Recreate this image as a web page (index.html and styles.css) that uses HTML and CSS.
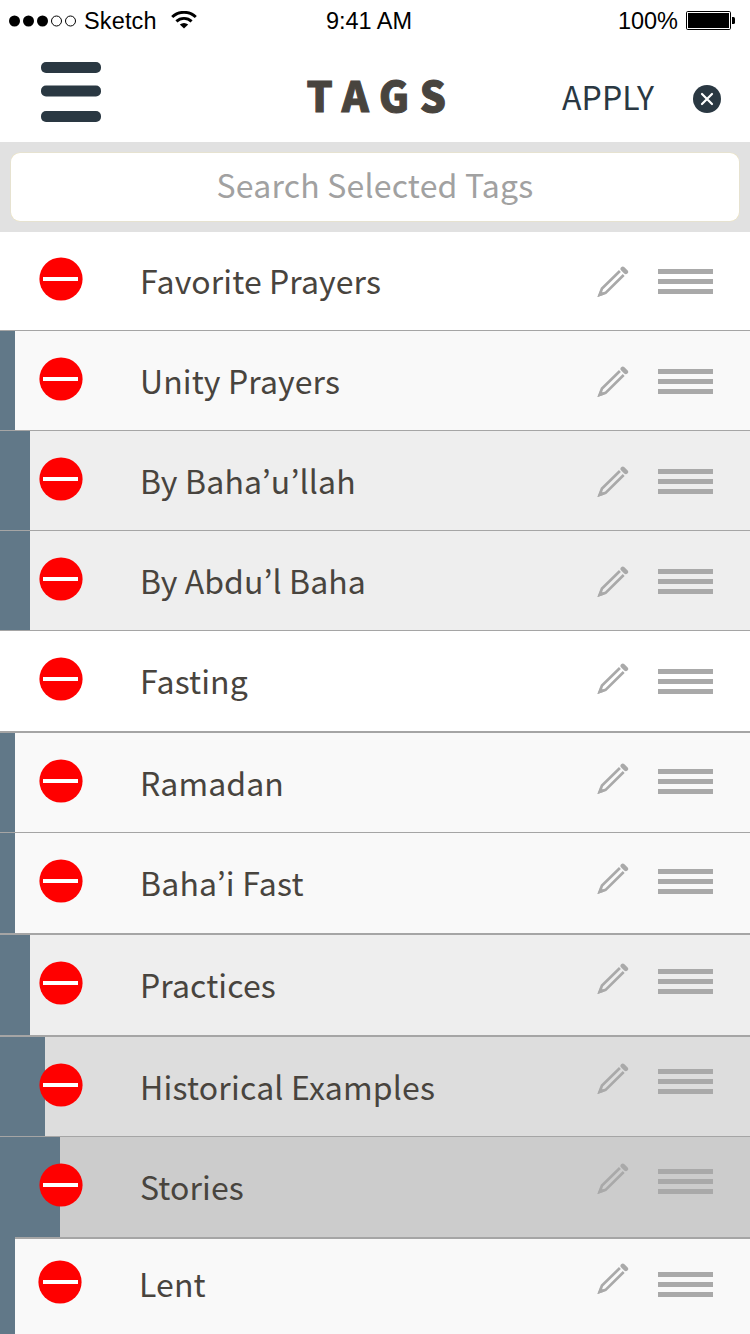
FILE: index.html
```html
<!DOCTYPE html>
<html lang="en">
<head>
<meta charset="utf-8">
<title>Tags</title>
<link rel="stylesheet" href="styles.css">
</head>
<body>
<svg class="defs" aria-hidden="true">
  <symbol id="remove" viewBox="0 0 44 44">
    <circle cx="22" cy="22" r="21.6" fill="#ff0000"/>
    <path d="M4 22H39" stroke="#fff" stroke-width="4"/>
  </symbol>
  <symbol id="remove-last" viewBox="0 0 44 44">
    <circle cx="22" cy="22" r="21.6" fill="#ff0000"/>
    <path d="M5 22H40" stroke="#fff" stroke-width="4"/>
  </symbol>
  <symbol id="pencil" viewBox="0 0 32 32">
    <path d="M22.9 5L5 22.5L2.600 28.800L8.600 26.900L26.700 9" fill="none" stroke="#a9a9a9" stroke-width="2.700"/>
    <path d="M.6 31L3.400 24L7.500 28.600Z" fill="#a9a9a9"/>
    <path d="M25.800 2.900L28.800 5.900" stroke="#a9a9a9" stroke-width="4.600" stroke-linecap="round"/>
  </symbol>
  <symbol id="grip" viewBox="0 0 55 25">
    <path d="M0 2.5H55M0 12.5H55M0 22.5H55" stroke="#a9a9a9" stroke-width="5"/>
  </symbol>
</svg>
<div class="screen">
  <div class="status">
    <div class="carrier">
      <svg class="signal" width="68" height="12" viewBox="0 0 68 12">
        <circle cx="5.5" cy="6" r="5.5"/><circle cx="19.5" cy="6" r="5.5"/><circle cx="33.5" cy="6" r="5.5"/>
        <g fill="none" stroke="#000"><circle cx="47.5" cy="6" r="5"/><circle cx="61.5" cy="6" r="5"/></g>
      </svg>
      <span class="carrier-name">Sketch</span>
      <svg class="wifi" width="26" height="18" viewBox="0 0 26 18">
        <g fill="none" stroke="#000"><path d="M1.200 6A17.300 17.300 0 0 1 24.800 6" stroke-width="3"/><path d="M5.400 10.400A11 11 0 0 1 20.600 10.400" stroke-width="2.900"/></g>
        <path d="M13 17.600L8.800 13.600Q13 10.200 17.200 13.600Z"/>
      </svg>
    </div>
    <span class="time">9:41 AM</span>
    <div class="power">
      <span class="percent">100%</span>
      <svg width="49" height="19" viewBox="0 0 49 19">
        <rect x=".5" y=".5" width="44" height="18" rx="1.2" fill="none" stroke="#000"/>
        <rect x="2" y="2" width="41" height="15"/>
        <path d="M46 6h1.500q1.500 0 1.500 1.500v4q0 1.500-1.500 1.500H46z"/>
      </svg>
    </div>
  </div>
  <header class="header">
    <svg class="menu" width="60" height="60" viewBox="0 0 60 60" fill="#2a3842">
      <rect width="60" height="11" rx="5"/><rect y="23.500" width="60" height="11" rx="5"/><rect y="49" width="60" height="11" rx="5"/>
    </svg>
    <h1 class="title">TAGS</h1>
    <span class="apply">APPLY</span>
    <svg class="close" width="28" height="28" viewBox="0 0 28 28">
      <circle cx="14" cy="14" r="14" fill="#2a3842"/>
      <path d="M9 9L19 19M19 9L9 19" stroke="#fff" stroke-width="2.200" stroke-linecap="round"/>
    </svg>
  </header>
  <div class="search"><div class="field"><span class="hint">Search Selected Tags</span></div></div>
  <ul class="tags">
    <li class="tag first"><svg class="remove"><use href="#remove"/></svg><span class="name">Favorite Prayers</span><svg class="pencil"><use href="#pencil"/></svg><svg class="grip"><use href="#grip"/></svg></li>
    <li class="tag level1"><svg class="remove"><use href="#remove"/></svg><span class="name">Unity Prayers</span><svg class="pencil"><use href="#pencil"/></svg><svg class="grip"><use href="#grip"/></svg></li>
    <li class="tag level2"><svg class="remove"><use href="#remove"/></svg><span class="name loose">By Baha’u’llah</span><svg class="pencil"><use href="#pencil"/></svg><svg class="grip"><use href="#grip"/></svg></li>
    <li class="tag level2"><svg class="remove"><use href="#remove"/></svg><span class="name">By Abdu’l Baha</span><svg class="pencil"><use href="#pencil"/></svg><svg class="grip"><use href="#grip"/></svg></li>
    <li class="tag thick fasting"><svg class="remove"><use href="#remove"/></svg><span class="name">Fasting</span><svg class="pencil"><use href="#pencil"/></svg><svg class="grip"><use href="#grip"/></svg></li>
    <li class="tag level1 ramadan"><svg class="remove"><use href="#remove"/></svg><span class="name">Ramadan</span><svg class="pencil"><use href="#pencil"/></svg><svg class="grip"><use href="#grip"/></svg></li>
    <li class="tag level1 thick ramadan"><svg class="remove"><use href="#remove"/></svg><span class="name loose">Baha’i Fast</span><svg class="pencil"><use href="#pencil"/></svg><svg class="grip"><use href="#grip"/></svg></li>
    <li class="tag level2 thick practices"><svg class="remove"><use href="#remove"/></svg><span class="name">Practices</span><svg class="pencil"><use href="#pencil"/></svg><svg class="grip"><use href="#grip"/></svg></li>
    <li class="tag level3 stories"><svg class="remove"><use href="#remove"/></svg><span class="name loose">Historical Examples</span><svg class="pencil"><use href="#pencil"/></svg><svg class="grip"><use href="#grip"/></svg></li>
    <li class="tag level4 thick stories joined"><svg class="remove"><use href="#remove"/></svg><span class="name">Stories</span><svg class="pencil"><use href="#pencil"/></svg><svg class="grip"><use href="#grip"/></svg></li>
    <li class="tag level1 last"><svg class="remove"><use href="#remove-last"/></svg><span class="name">Lent</span><svg class="pencil"><use href="#pencil"/></svg><svg class="grip"><use href="#grip"/></svg></li>
  </ul>
</div>
</body>
</html>
```
FILE: styles.css
```css
* { box-sizing: border-box; }
body {
  margin: 0;
  background: #fff;
  color: #48443e;
  font-family: "Noto Sans CJK KR", "Noto Sans CJK JP", sans-serif;
}
svg { display: block; flex: none; }
.defs { position: absolute; width: 0; height: 0; }
.screen { width: 750px; height: 1334px; overflow: hidden; }

.status {
  display: grid;
  grid-template-columns: 250px 1fr 250px;
  height: 40px;
  padding: 0 15px 0 9px;
  font: 23.500px/40px "Liberation Sans", sans-serif;
  color: #000;
}
.carrier, .power { display: flex; align-items: center; height: 40px; }
.signal { margin-top: 1px; }
.carrier-name { margin: 2px 0 0 7px; letter-spacing: .15px; }
.wifi { margin-left: 14px; }
.time { text-align: center; padding: 1px 6px 0 0; }
.power { justify-content: flex-end; gap: 8px; }
.percent { margin-top: 2px; }

.header {
  display: grid;
  grid-template-columns: 60px 205px 256px 131px 28px;
  height: 102px;
  padding-left: 41px;
  align-items: start;
}
.menu { margin-top: 22px; }
.title {
  grid-column: 3;
  margin: 24px 0 0 .5px;
  font-size: 41px;
  line-height: 60px;
  font-weight: 900;
  letter-spacing: 10.800px;
  -webkit-text-stroke: 1px #48443e;
}
.apply {
  margin-top: 36px;
  font-size: 32px;
  line-height: 40px;
  letter-spacing: .1px;
  color: #2a3842;
}
.close { margin-top: 45px; }

.search { height: 90px; padding: 11px 11px 12px; background: #e1e1e1; }
.field {
  height: 68px;
  border-radius: 9px;
  background: #fff;
  box-shadow: 0 0 0 .5px #ece3bf;
  color: #a1a1a1;
  font-size: 32px;
  letter-spacing: .2px;
  line-height: 40px;
  padding-top: 11px;
  text-align: center;
}

.tags { margin: 0; padding: 0; list-style: none; }
.tag {
  --pencil: 35px;
  --grip: 38px;
  --bar: 0px;
  --tone: #fff;
  display: grid;
  grid-template-columns: 101px 457px 61px 55px;
  align-items: start;
  height: 100px;
  padding-left: 39px;
  border-bottom: 1px solid #a5a5a5;
  background: linear-gradient(to right, #617888 var(--bar), var(--tone) var(--bar)) padding-box;
}
.remove { width: 44px; height: 44px; margin-top: 26px; }
.name {
  margin-top: 29px;
  font-size: 32px;
  line-height: 40px;
  letter-spacing: .1px;
  white-space: nowrap;
}
.loose { letter-spacing: .2px; }
.pencil { width: 32px; height: 32px; margin-top: var(--pencil); }
.grip { width: 55px; height: 25px; margin-top: var(--grip); }

.first { height: 99px; --pencil: 34px; --grip: 37px; }
.first .remove { margin-top: 25px; }
.first .name { margin-top: 28px; }
.thick { height: 102px; border-bottom-width: 2px; }
.level1 { --bar: 15px; --tone: #f9f9f9; }
.level2 { --bar: 30px; --tone: #eee; }
.level3 { --bar: 45px; --tone: #ddd; }
.level4 { --bar: 60px; --tone: #ccc; }
.fasting { --pencil: 32px; }
.ramadan { --pencil: 30px; --grip: 36px; }
.practices { --pencil: 28px; --grip: 34px; }
.stories { --pencil: 26px; --grip: 32px; }
.joined { border-image: linear-gradient(to right, #617888 17px, #a5a5a5 17px) 2; }
.last { height: 95px; border-bottom: 0; --pencil: 24px; --grip: 33px; }
.last .remove { margin: 21px 0 0 -1px; }
.last .name { margin: 24px 0 0 -1px; }
```
